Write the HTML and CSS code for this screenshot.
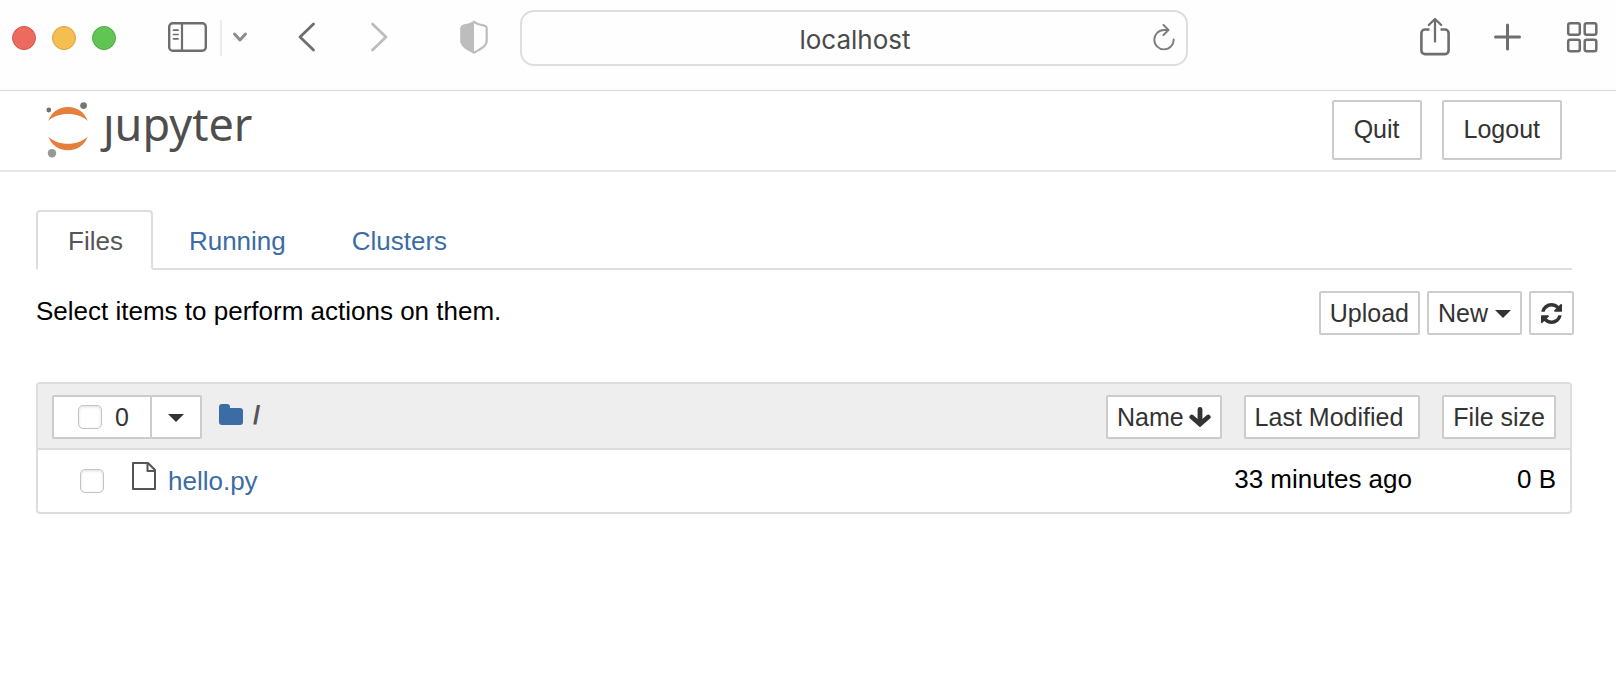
FILE: index.html
```html
<!DOCTYPE html>
<html lang="en">
<head>
<meta charset="utf-8">
<title>Home Page - Jupyter</title>
<link rel="stylesheet" href="styles.css">
</head>
<body>
<div class="chrome">
  <div class="chrome-left">
    <div class="lights">
      <button class="light light-red" aria-label="Close"></button>
      <button class="light light-yellow" aria-label="Minimize"></button>
      <button class="light light-green" aria-label="Zoom"></button>
    </div>
    <button class="icon-btn sidebar-btn" aria-label="Sidebar">
      <svg width="40" height="34" viewBox="0 0 40 34" fill="none" stroke="#6e6e6e">
        <rect x="1.200" y="2.200" width="36.600" height="27.600" rx="3.500" stroke-width="2.400"/>
        <path d="M14 2.500V30" stroke-width="2.200"/>
        <path d="M5.500 9.200h4.600M5.500 13.500h4.600M5.500 17.800h4.600" stroke-width="1.700" stroke-linecap="round"/>
      </svg>
    </button>
    <span class="chrome-divider"></span>
    <button class="icon-btn groups-btn" aria-label="Tab groups">
      <svg width="16" height="14" viewBox="0 0 16 14" fill="none" stroke="#8a8a8e" stroke-width="3" stroke-linecap="round" stroke-linejoin="round"><path d="M2.500 3L8 9l5.500-6"/></svg>
    </button>
    <button class="icon-btn back-btn" aria-label="Back">
      <svg width="18" height="32" viewBox="0 0 18 32" fill="none" stroke="#6e6e6e" stroke-width="2.800" stroke-linecap="round" stroke-linejoin="round"><path d="M15.500 2L2 15l13.500 13"/></svg>
    </button>
    <button class="icon-btn forward-btn" aria-label="Forward">
      <svg width="18" height="32" viewBox="0 0 18 32" fill="none" stroke="#bdbdbd" stroke-width="2.800" stroke-linecap="round" stroke-linejoin="round"><path d="M2.500 2L16 15 2.500 28"/></svg>
    </button>
    <button class="icon-btn shield-btn" aria-label="Privacy report">
      <svg width="28" height="36" viewBox="0 0 28 36"><path d="M14 1.800C10.500 4.500 6.500 5 3.200 5.700 2 6 1.300 6.500 1.300 8v13c0 5 6 8 12.700 11.600C20.700 29 26.700 26 26.700 21V8c0-1.500-.7-2-1.900-2.300C21.500 5 17.500 4.500 14 1.800z" fill="none" stroke="#bdbdbd" stroke-width="2.200"/><path d="M14 1.800C10.500 4.500 6.500 5 3.200 5.700 2 6 1.300 6.500 1.300 8v13c0 5 6 8 12.700 11.600z" fill="#bdbdbd"/></svg>
    </button>
  </div>
  <div class="address">
    <input class="address-input" type="text" value="localhost" aria-label="Address">
    <button class="icon-btn reload-btn" aria-label="Reload">
      <svg width="24" height="28" viewBox="0 0 24 28" fill="none" stroke="#7c7c7c" stroke-width="1.900" stroke-linecap="round" stroke-linejoin="round"><path d="M16 6H12A9.700 9.700 0 1 0 21.700 15.500M11.500 1L16.500 6l-5 5"/></svg>
    </button>
  </div>
  <div class="chrome-right">
    <button class="icon-btn" aria-label="Share">
      <svg width="30" height="42" viewBox="0 0 30 42" fill="none" stroke="#6e6e6e" stroke-linecap="round" stroke-linejoin="round"><path d="M9.500 12.500H5a3.600 3.600 0 0 0-3.600 3.600V33.500A3.600 3.600 0 0 0 5 37.100h20a3.600 3.600 0 0 0 3.600-3.600V16.100A3.600 3.600 0 0 0 25 12.500h-4.500" stroke-width="2.600" stroke-linecap="butt"/><path d="M15 24.500V2.500M8.800 8L15 2l6.200 6" stroke-width="2.300"/></svg>
    </button>
    <button class="icon-btn" aria-label="New tab">
      <svg width="28" height="30" viewBox="0 0 28 30" stroke="#6e6e6e" stroke-width="3" stroke-linecap="round"><path d="M13.500 2v24M1.500 14h24"/></svg>
    </button>
    <button class="icon-btn" aria-label="Tab overview">
      <svg width="32" height="34" viewBox="0 0 32 34" fill="none" stroke="#6e6e6e" stroke-width="2.500"><rect x="2.200" y="2.200" width="11.600" height="11.600" rx="2"/><rect x="18.700" y="2.200" width="11.600" height="11.600" rx="2"/><rect x="2.200" y="18.700" width="11.600" height="11.600" rx="2"/><rect x="18.700" y="18.700" width="11.600" height="11.600" rx="2"/></svg>
    </button>
  </div>
</div>

<header class="header">
  <a class="logo" href="#" aria-label="jupyter">
    <svg width="44" height="58" viewBox="0 0 44 58">
      <path d="M2.200 20C5.300 11.500 12.500 6 22 6s16.700 5.500 19.800 14C37 15.300 30 13 22 13S7 15.300 2.200 20z" fill="#e57f3c"/>
      <path d="M2.200 35.500C5.300 44 12.500 49.300 22 49.300s16.700-5.300 19.800-13.800C37 40.200 30 42.800 22 42.800S7 40.200 2.200 35.500z" fill="#e57f3c"/>
      <circle cx="2.800" cy="9" r="2.400" fill="#6f7070"/>
      <circle cx="37.600" cy="4.600" r="3.400" fill="#767677"/>
      <circle cx="6" cy="52.200" r="4.200" fill="#989798"/>
    </svg>
    <span class="logo-text">ȷupyter</span>
  </a>
  <div class="header-actions">
    <button class="btn btn-large">Quit</button>
    <button class="btn btn-large">Logout</button>
  </div>
</header>

<main class="page">
  <nav class="tabs">
    <a class="tab tab-active" href="#files">Files</a>
    <a class="tab" href="#running">Running</a>
    <a class="tab" href="#clusters">Clusters</a>
  </nav>

  <div class="toolbar">
    <p class="hint">Select items to perform actions on them.</p>
    <div class="toolbar-actions">
      <button class="btn">Upload</button>
      <button class="btn">New <span class="caret"></span></button>
      <button class="btn btn-refresh" aria-label="Refresh">
        <svg width="21" height="21" viewBox="0 0 1536 1536" fill="#333"><path d="M1511 928q0 5-1 7-64 268-268 434.500T764 1536q-146 0-282.500-55T238 1324l-129 129q-19 19-45 19t-45-19-19-45V960q0-26 19-45t45-19h448q26 0 45 19t19 45-19 45l-137 137q71 66 161 102t187 36q134 0 250-65t186-179q11-17 53-117 8-23 30-23h192q13 0 22.500 9.500t9.500 22.500zm25-800v448q0 26-19 45t-45 19h-448q-26 0-45-19t-19-45 19-45l138-138Q969 256 768 256q-134 0-250 65T332 500q-11 17-53 117-8 23-30 23H50q-13 0-22.500-9.500T18 608v-7q65-268 270-434.500T768 0q146 0 284 55.500T1297 212l130-129q19-19 45-19t45 19 19 45z"/></svg>
      </button>
    </div>
  </div>

  <section class="files">
    <div class="files-head">
      <div class="select-group">
        <label class="btn select-all"><input class="check" type="checkbox" aria-label="Select all"> 0</label>
        <button class="btn select-menu" aria-label="Select by type"><span class="caret"></span></button>
      </div>
      <div class="crumbs">
        <a class="crumb-home" href="#" aria-label="Home">
          <svg width="24" height="22" viewBox="0 0 24 22" fill="#3b6ca6"><path d="M3 0h5a3 3 0 0 1 3 3v1h10a3 3 0 0 1 3 3v11a3 3 0 0 1-3 3H3a3 3 0 0 1-3-3V3a3 3 0 0 1 3-3z"/></svg>
        </a>
        <span class="crumb-sep">/</span>
      </div>
      <div class="sorts">
        <button class="btn sort-name">Name
          <svg width="22" height="21" viewBox="0 0 22 21" fill="none" stroke="#333" stroke-width="4.800" stroke-linecap="round" stroke-linejoin="miter"><path d="M11 2.500V16"/><path d="M2.800 10L11 17l8.200-7"/></svg>
        </button>
        <button class="btn sort-modified">Last Modified</button>
        <button class="btn">File size</button>
      </div>
    </div>
    <div class="file-row">
      <input class="check" type="checkbox" aria-label="Select hello.py">
      <svg class="file-icon" width="24" height="28" viewBox="0 0 24 28" fill="none" stroke="#555" stroke-width="2" stroke-linejoin="round"><path d="M1 1h15l7 7v19H1zM15.500 1v8H23"/></svg>
      <a class="file-name" href="#">hello.py</a>
      <span class="file-meta file-modified">33 minutes ago</span>
      <span class="file-meta file-size">0 B</span>
    </div>
  </section>
</main>
</body>
</html>
```
FILE: styles.css
```css
* {
  box-sizing: border-box;
}

body {
  margin: 0;
  background: #fff;
  color: #000;
  font: 26px/36px "Liberation Sans", Arial, sans-serif;
}

a {
  color: #3b6ca6;
  text-decoration: none;
}

button,
input {
  margin: 0;
  font: inherit;
}

svg {
  display: block;
  flex: none;
}

/* Browser window bar */
.chrome {
  display: grid;
  grid-template-columns: 520px minmax(0, 1fr) 428px;
  align-items: center;
  height: 91px;
  padding-bottom: 15px;
  border-bottom: 1px solid #d6d6d6;
  background: #fefefe;
}

.chrome-left,
.chrome-right,
.lights {
  display: flex;
  align-items: center;
}

.lights {
  gap: 16px;
  padding-left: 12px;
}

.light {
  width: 24px;
  height: 24px;
  padding: 0;
  border: 1px solid;
  border-radius: 50%;
}

.light-red {
  border-color: #d5564b;
  background: #ec6a5e;
}

.light-yellow {
  border-color: #d8a140;
  background: #f4bf4f;
}

.light-green {
  border-color: #4dab3f;
  background: #61c554;
}

.icon-btn {
  flex: none;
  padding: 0;
  border: 0;
  background: none;
}

.sidebar-btn {
  margin-left: 52px;
}

.chrome-divider {
  width: 2px;
  height: 36px;
  margin-left: 12px;
  background: #ececec;
}

.groups-btn {
  margin-left: 10px;
}

.back-btn {
  margin-left: 50px;
}

.forward-btn {
  margin-left: 54px;
}

.shield-btn {
  margin-left: 72px;
}

.address {
  display: flex;
  align-items: center;
  height: 56px;
  padding: 0 10px 0 36px;
  border: 2px solid #dedede;
  border-radius: 14px;
}

.address-input {
  flex: 1;
  min-width: 0;
  padding: 5px 0 0;
  border: 0;
  outline: 0;
  background: none;
  color: #4a4a4a;
  font-family: Inter, "Liberation Sans", sans-serif;
  text-align: center;
}

.chrome-right {
  justify-content: flex-end;
  gap: 44px;
  padding-right: 18px;
}

/* Notebook header */
.header {
  display: flex;
  align-items: center;
  justify-content: space-between;
  padding: 9px 54px 10px 46px;
  border-bottom: 2px solid #e7e7e7;
}

.logo {
  display: flex;
  align-items: center;
  gap: 13px;
}

.logo-text {
  padding-bottom: 12px;
  color: #4e4e4e;
  font: 45px/48px "Noto Sans", sans-serif;
}

.header-actions {
  display: flex;
  gap: 20px;
}

.btn {
  display: flex;
  align-items: center;
  gap: 7px;
  height: 44px;
  padding: 0 9px;
  border: 2px solid #ccc;
  border-radius: 2px;
  background: #fff;
  color: #333;
  font-size: 25px;
  line-height: 36px;
  white-space: nowrap;
}

.btn-large {
  height: 60px;
  padding: 0 20px 2px;
}

.btn-refresh {
  padding: 0 10px;
}

.caret {
  margin-top: 2px;
  border: 8px solid transparent;
  border-top-color: #333;
  border-bottom: 0;
}

/* Dashboard */
.page {
  padding: 38px 44px 0 36px;
}

.tabs {
  display: flex;
  gap: 4px;
  border-bottom: 2px solid #ddd;
}

.tab {
  height: 60px;
  margin-bottom: -2px;
  padding: 11px 28px 11px 30px;
  border: 2px solid transparent;
  border-radius: 4px 4px 0 0;
}

.tab-active {
  border-color: #ddd;
  border-bottom-color: #fff;
  color: #555;
}

.toolbar {
  display: flex;
  align-items: center;
  justify-content: space-between;
  margin: 21px -2px 47px 0;
}

.hint {
  margin: 0;
  padding-bottom: 4px;
}

.toolbar-actions {
  display: flex;
  gap: 7px;
}

.files {
  border: 2px solid #ddd;
  border-radius: 4px;
}

.files-head {
  display: flex;
  align-items: center;
  height: 66px;
  padding: 2px 14px 0;
  border-bottom: 2px solid #ddd;
  background: #eee;
}

.select-group {
  display: flex;
}

.select-all {
  gap: 13px;
  width: 100px;
  padding-left: 24px;
  border-radius: 2px 0 0 2px;
}

.select-menu {
  justify-content: center;
  width: 52px;
  margin-left: -2px;
  border-radius: 0 2px 2px 0;
}

.check {
  flex: none;
  width: 24px;
  height: 24px;
  appearance: none;
  border: 1px solid #c4c4c4;
  border-radius: 5px;
  background: #fff;
  box-shadow: inset 0 1px 3px #ddd;
}

.crumbs {
  display: flex;
  align-items: center;
  gap: 10px;
  padding: 0 0 4px 17px;
}

.crumb-sep {
  color: #555;
  font-weight: bold;
}

.sorts {
  display: flex;
  gap: 22px;
  margin-left: auto;
}

.sort-name {
  gap: 5px;
}

.sort-modified {
  padding-right: 15px;
}

.file-row {
  display: flex;
  align-items: center;
  height: 62px;
  padding: 0 14px 0 42px;
}

.file-icon {
  margin: 0 12px 10px 28px;
}

.file-meta {
  padding-bottom: 4px;
}

.file-modified {
  margin-left: auto;
}

.file-size {
  width: 144px;
  text-align: right;
}
```
